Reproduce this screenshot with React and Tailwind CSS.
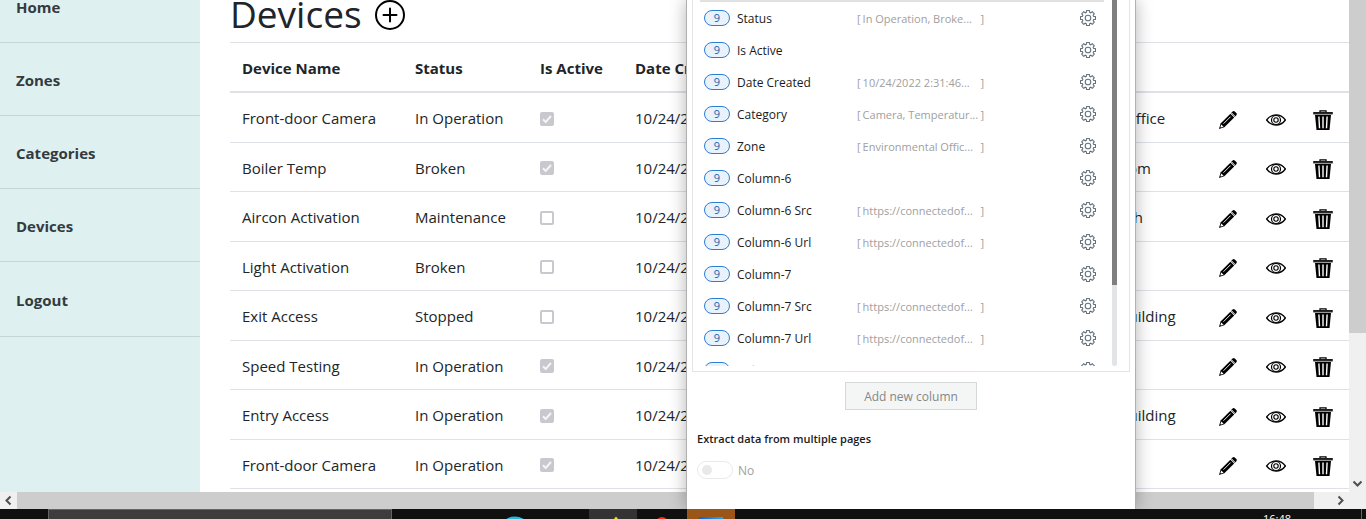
import React from "react";

const navItems = ["Home", "Zones", "Categories", "Devices", "Logout"];

const devices = [
  { name: "Front-door Camera", status: "In Operation", active: true, category: "Camera", zone: "Environmental Office" },
  { name: "Boiler Temp", status: "Broken", active: true, category: "Temperature", zone: "Lower Boiler Room" },
  { name: "Aircon Activation", status: "Maintenance", active: false, category: "Switch", zone: "Floor Three South" },
  { name: "Light Activation", status: "Broken", active: false, category: "Switch", zone: "Reception" },
  { name: "Exit Access", status: "Stopped", active: false, category: "Access", zone: "Headquarters Building" },
  { name: "Speed Testing", status: "In Operation", active: true, category: "Network", zone: "Car Park" },
  { name: "Entry Access", status: "In Operation", active: true, category: "Access", zone: "Headquarters Building" },
  { name: "Front-door Camera", status: "In Operation", active: true, category: "Camera", zone: "Reception" },
];

const columns = [
  { name: "Status", sample: "In Operation, Broke..." },
  { name: "Is Active" },
  { name: "Date Created", sample: "10/24/2022 2:31:46..." },
  { name: "Category", sample: "Camera, Temperatur..." },
  { name: "Zone", sample: "Environmental Offic..." },
  { name: "Column-6" },
  { name: "Column-6 Src", sample: "https://connectedof..." },
  { name: "Column-6 Url", sample: "https://connectedof..." },
  { name: "Column-7" },
  { name: "Column-7 Src", sample: "https://connectedof..." },
  { name: "Column-7 Url", sample: "https://connectedof..." },
  { name: "Column-8", faded: true },
];

const gearPoints = Array.from({ length: 8 }, (_, i) => {
  const base = (i * Math.PI) / 4;
  return [
    [-0.27, 5.9],
    [-0.2, 7.6],
    [0.2, 7.6],
    [0.27, 5.9],
  ]
    .map(([a, r]) => `${(8 + r * Math.sin(base + a)).toFixed(2)},${(8 - r * Math.cos(base + a)).toFixed(2)}`)
    .join(" ");
}).join(" ");

function GearIcon() {
  return (
    <svg viewBox="0 0 16 16" className="size-4 text-[#65717c]" fill="none" stroke="currentColor" strokeWidth="1.1" aria-hidden="true">
      <polygon points={gearPoints} strokeLinejoin="round" />
      <circle cx="8" cy="8" r="2.8" />
    </svg>
  );
}

function PlusCircleIcon() {
  return (
    <svg viewBox="0 0 30 30" className="size-[30px]" fill="none" stroke="black" strokeWidth="2" aria-hidden="true">
      <circle cx="15" cy="15" r="14" />
      <path d="M15 8.5v13M8.5 15h13" strokeLinecap="round" />
    </svg>
  );
}

function PencilIcon() {
  return (
    <svg viewBox="0 0 20 20" className="size-5" aria-hidden="true">
      <path d="M14.6 1.6c.7-.7 1.5-.7 2.2 0l1.5 1.5c.7.7.7 1.500 0 2.200L16.800 6.900 13 3.100z" />
      <path d="M12.400 3.700l3.800 3.800L6.300 17.300 1 19l1.600-5.400z" />
      <path d="M12.600 6.600L5.500 13.700" stroke="white" strokeWidth=".9" />
      <path d="M3.300 14.500l2.300 2.200-2.700.900-.5-.5z" fill="white" />
      <path d="M13.500 2.700l3.800 3.800" stroke="white" strokeWidth=".8" />
    </svg>
  );
}

function EyeIcon() {
  return (
    <svg viewBox="0 0 20 20" className="size-5" fill="none" stroke="black" aria-hidden="true">
      <path d="M.6 10C3 6.700 6.200 4.900 10 4.900S17 6.700 19.400 10C17 13.300 13.800 15.100 10 15.100S3 13.300.6 10z" strokeWidth="1.3" />
      <circle cx="10" cy="10" r="4.500" strokeWidth="1.200" />
      <circle cx="10" cy="10" r="2.200" strokeWidth="1.100" />
    </svg>
  );
}

function TrashIcon() {
  return (
    <svg viewBox="0 0 20 20" className="size-5" aria-hidden="true">
      <path d="M7 2V.9h6V2" fill="none" stroke="black" strokeWidth="1.300" />
      <path d="M.3 2h19.400v2.400H.3z" />
      <path d="M1.200 3.100h17.600" stroke="#777" strokeWidth=".6" />
      <path d="M2 5h16l-1.500 15h-13z" />
      <path d="M5.900 6.500l.6 11.700M10 6.500v11.700M14.100 6.500l-.6 11.700" stroke="white" strokeWidth="1.400" />
    </svg>
  );
}

function Chevron({ d, className }) {
  return (
    <svg viewBox="0 0 17 17" className={`size-[17px] ${className || ""}`} fill="none" stroke="#505050" strokeWidth="2" aria-hidden="true">
      <path d={d} />
    </svg>
  );
}

function Sidebar() {
  return (
    <nav className="-mt-[30px] w-[200px] shrink-0 bg-[#def1f0]">
      <ul>
        {navItems.map((item) => (
          <li key={item} className="group border-b border-[#c3d7d6]">
            <a href="#" className="flex h-[72px] items-center px-4 pt-[2px] text-[15px] font-bold text-[#343a40] group-last:h-[74px]">
              {item}
            </a>
          </li>
        ))}
      </ul>
    </nav>
  );
}

function ActiveBox({ checked, label }) {
  return (
    <span className="grid size-[14px]">
      <input
        type="checkbox"
        defaultChecked={checked}
        disabled
        aria-label={label}
        className="col-start-1 row-start-1 size-[14px] appearance-none rounded-xs border-2 border-[#c8c8ce] bg-white checked:bg-[#c8c8ce]"
      />
      {checked && (
        <svg viewBox="0 0 14 14" className="col-start-1 row-start-1 size-[14px]" fill="none" stroke="#f5f5f5" strokeWidth="2" aria-hidden="true">
          <path d="M3 7.300l2.700 2.700L11 4" />
        </svg>
      )}
    </span>
  );
}

function DeviceTable() {
  const head = "border-y border-b-2 border-[#dee2e6] px-3 pt-[2px] text-left font-bold";
  const cell = "border-b border-[#dee2e6] px-3 pt-[2px]";
  return (
    <table className="w-full table-fixed border-separate border-spacing-0 whitespace-nowrap text-[15px]">
      <colgroup>
        <col className="w-[173px]" />
        <col className="w-[125px]" />
        <col className="w-[95px]" />
        <col className="w-[218px]" />
        <col className="w-[165px]" />
        <col />
        <col className="w-[143px]" />
      </colgroup>
      <thead>
        <tr className="h-[51px]">
          <th className={head}>Device Name</th>
          <th className={head}>Status</th>
          <th className={head}>Is Active</th>
          <th className={head}>Date Created</th>
          <th className={head}>Category</th>
          <th className={head}>Zone</th>
          <th className={head} aria-label="Actions" />
        </tr>
      </thead>
      <tbody>
        {devices.map((d, i) => (
          <tr key={i} className="odd:h-[50px] even:h-[49px]">
            <td className={cell}>{d.name}</td>
            <td className={cell}>{d.status}</td>
            <td className={cell}>
              <ActiveBox checked={d.active} label={`${d.name} is active`} />
            </td>
            <td className={cell}>10/24/2022 2:31:46 PM</td>
            <td className={cell}>{d.category}</td>
            <td className={cell}>{d.zone}</td>
            <td className="border-b border-[#dee2e6] px-3 pt-1">
              <div className="flex justify-between pr-1">
                <button type="button" aria-label="Edit"><PencilIcon /></button>
                <button type="button" aria-label="View"><EyeIcon /></button>
                <button type="button" aria-label="Delete"><TrashIcon /></button>
              </div>
            </td>
          </tr>
        ))}
      </tbody>
    </table>
  );
}

function ExtractPanel() {
  return (
    <aside className="absolute inset-y-0 right-[230px] flex w-[450px] flex-col border-x border-[#b0b0b0] bg-white px-[5px] text-xs text-[#1b1b1b] shadow-[0_0_16px_rgba(0,0,0,0.3)]">
      <div className="flex h-[372px] border border-t-0 border-[#e3e4e5] pr-3 pb-[5px] pl-[7px]">
        <div className="grow overflow-hidden">
          <div className="mr-2 h-[2px] bg-[#e1e1e1]" />
          <ul>
            {columns.map((c) => (
              <li key={c.name} className="flex h-8 items-center pr-4 pl-1">
                <span className="flex h-4 w-[26px] shrink-0 items-center justify-center rounded-full border border-[#2b7fd6] bg-[#e9f1fa] text-[11px] text-[#1f5fa8]">
                  9
                </span>
                <span className={c.faded ? "w-[127px] shrink-0 pt-[2px] pl-[7px] text-[#c4c4c4]" : "w-[127px] shrink-0 pt-[2px] pl-[7px]"}>{c.name}</span>
                {c.sample && (
                  <span className="flex w-[127px] shrink-0 justify-between pt-[2px] text-[11px] whitespace-nowrap text-[#a0a0a0]">
                    <span className="flex gap-[2px]">
                      <span>[</span>
                      <span>{c.sample}</span>
                    </span>
                    <span>]</span>
                  </span>
                )}
                <button type="button" className="ml-auto" aria-label={`${c.name} settings`}>
                  <GearIcon />
                </button>
              </li>
            ))}
          </ul>
        </div>
        <div className="flex w-[5px] flex-col rounded-b bg-[#e3e4e5]">
          <div className="h-[285px] bg-[#7f7f7f]" />
        </div>
      </div>
      <button type="button" className="mt-[10px] h-7 w-[132px] self-center border border-[#d5d8d8] bg-[#f4f6f6] pt-[2px] text-[#868686]">
        Add new column
      </button>
      <div className="px-[5px] pt-5">
        <h2 className="text-[11px] leading-[18px] font-semibold">Extract data from multiple pages</h2>
        <label className="mt-[13px] flex items-center gap-[5px] text-[#a0a0a0]">
          <input
            type="checkbox"
            role="switch"
            disabled
            className="h-[18px] w-9 appearance-none rounded-full border border-[#e9e9e9] bg-white before:m-[3px] before:ml-1 before:block before:size-[10px] before:rounded-full before:bg-[#e9e9e9]"
          />
          <span className="pt-[2px]">No</span>
        </label>
      </div>
    </aside>
  );
}

function Taskbar() {
  return (
    <footer className="flex h-[10px] shrink-0 overflow-hidden bg-[#101010]">
      <div className="ml-12 w-[344px] shrink-0 border border-b-0 border-[#666] bg-[#3d3d3d]" />
      <svg viewBox="0 0 197 10" className="h-[10px] w-[197px] shrink-0" aria-hidden="true">
        <ellipse cx="123" cy="14" rx="11" ry="6.500" fill="#27b9d8" />
      </svg>
      <svg viewBox="0 0 48 10" className="h-[10px] w-12 shrink-0 bg-[#333]" aria-hidden="true">
        <path d="M25 10l2-2.500 2 2.500z" fill="#f4e02c" />
      </svg>
      <svg viewBox="0 0 50 10" className="h-[10px] w-[50px] shrink-0" aria-hidden="true">
        <circle cx="25" cy="14" r="6" fill="#f92f1c" />
      </svg>
      <svg viewBox="0 0 48 10" className="h-[10px] w-12 shrink-0 bg-[#9c5519]" aria-hidden="true">
        <linearGradient id="tile">
          <stop stopColor="#0a5fe0" />
          <stop offset="1" stopColor="#2ba3ee" />
        </linearGradient>
        <path d="M12 8h24v2H12z" fill="url(#tile)" />
      </svg>
      <time className="mr-[70px] ml-auto pt-[3px] text-[11px] leading-[14px] text-white">16:48</time>
      <span className="mr-1 w-px bg-[#666]" />
    </footer>
  );
}

export default function App() {
  return (
    <div className="flex h-screen flex-col overflow-hidden bg-white font-['Open_Sans','Noto_Sans',sans-serif] text-[#212529]">
      <div className="relative flex min-h-0 grow flex-col overflow-hidden">
        <div className="flex min-h-0 grow">
          <div className="flex min-w-0 grow overflow-hidden">
            <Sidebar />
            <main className="-mt-[14px] min-w-0 grow pl-[30px]">
              <h1 className="flex h-[56px] items-center gap-[13px] text-[37px] leading-[54px]">
                Devices
                <button type="button" className="pt-[2px]" aria-label="Add device">
                  <PlusCircleIcon />
                </button>
              </h1>
              <DeviceTable />
            </main>
          </div>
          <div className="flex w-[17px] shrink-0 flex-col bg-[#f0f0f0]">
            <div className="h-[333px] bg-[#cdcdcd]" />
            <Chevron d="M4.500 6.500l4 4 4-4" className="mt-auto" />
          </div>
        </div>
        <div className="flex h-[17px] shrink-0 bg-[#f0f0f0] pr-[17px]">
          <Chevron d="M10.500 4.500l-4 4 4 4" />
          <div className="mr-[18px] grow bg-[#cdcdcd]" />
          <Chevron d="M6.500 4.500l4 4-4 4" />
        </div>
        <ExtractPanel />
      </div>
      <Taskbar />
    </div>
  );
}
